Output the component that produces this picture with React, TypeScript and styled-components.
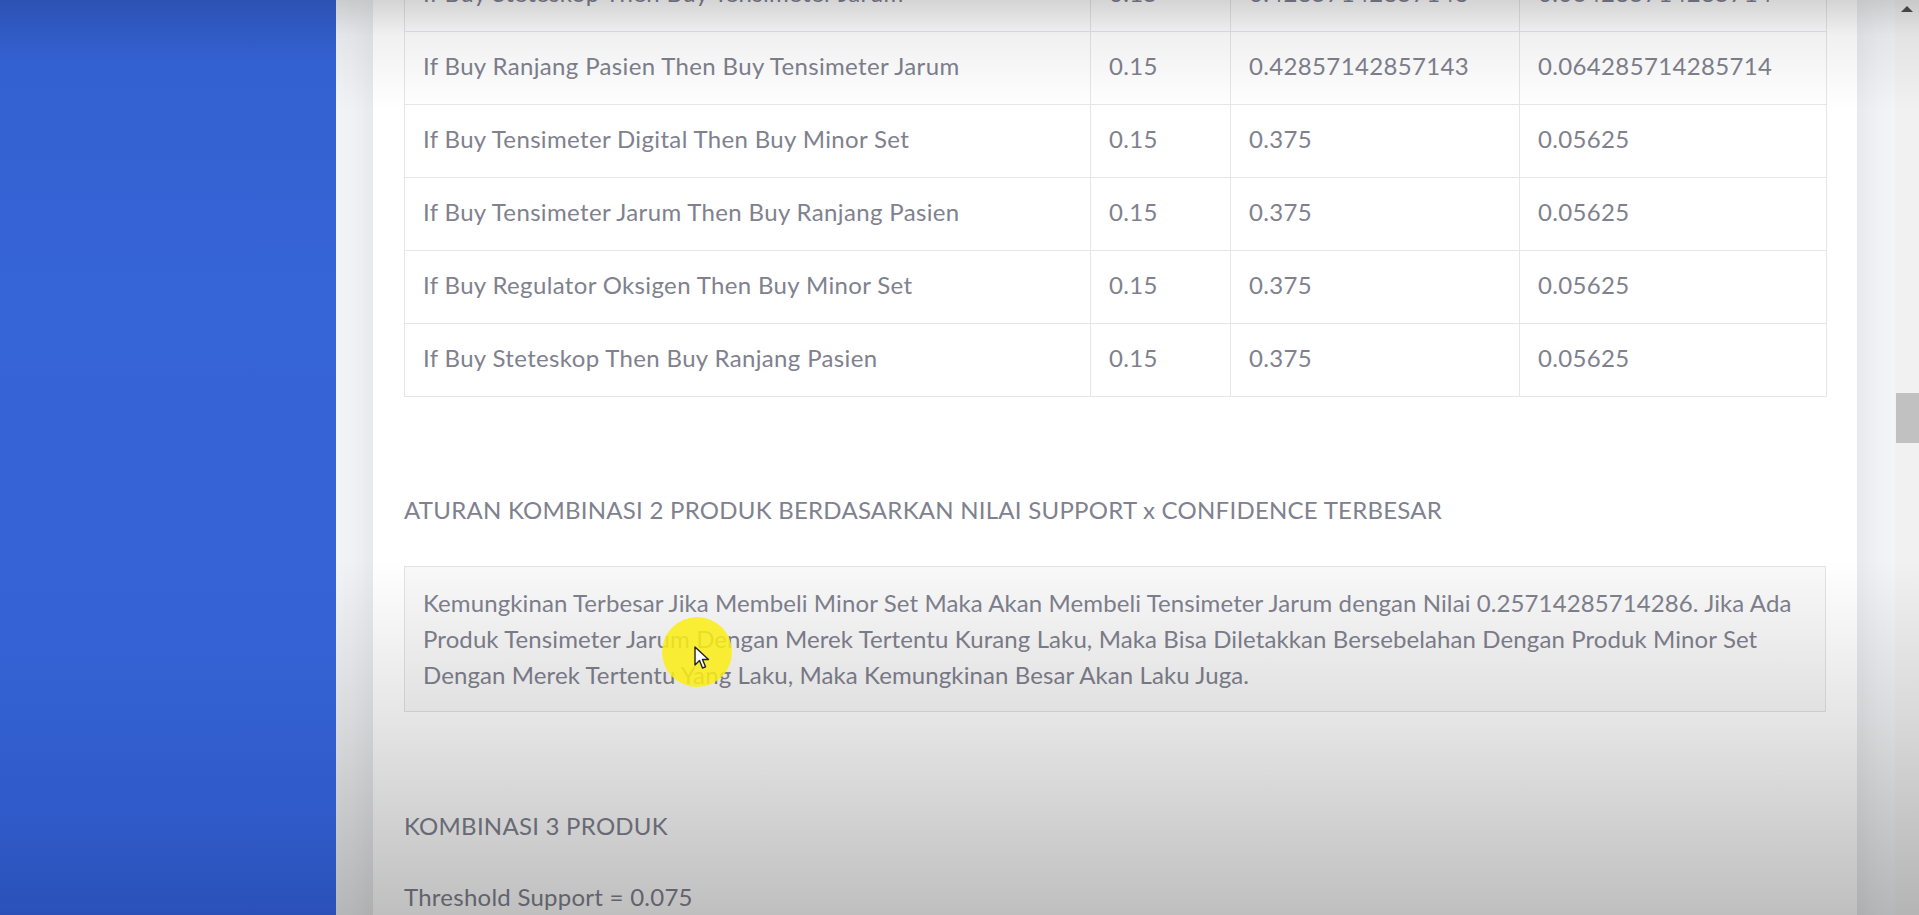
import React from "react";
import styled, { createGlobalStyle } from "styled-components";

const GlobalStyle = createGlobalStyle`
  html, body {
    margin: 0;
    padding: 0;
    overflow: hidden;
    background: #f8f9fc;
  }
  body {
    font-family: "Lato", "Open Sans", "Liberation Sans", sans-serif;
    -webkit-font-smoothing: antialiased;
  }
  * { box-sizing: border-box; }
`;

const Page = styled.div`
  position: relative;
  display: flex;
  width: 1919px;
  height: 915px;
  overflow: hidden;
`;

const Sidebar = styled.nav`
  flex: 0 0 336px;
  background: linear-gradient(
    180deg,
    #2d52b4 0px,
    #3361d1 60px,
    #3665d8 300px,
    #3563d5 650px,
    #2f5ac8 820px,
    #2b51b9 915px
  );
`;

const Main = styled.div`
  position: relative;
  flex: 1;
  display: flex;
  min-width: 0;
`;

const ContentWrapper = styled.div`
  flex: 1;
  min-width: 0;
  overflow: hidden;
  background: #f4f5f8;
  padding: 0 38px 0 37px;
`;

const Card = styled.section`
  display: flow-root;
  background: #ffffff;
  box-shadow: 0 4px 42px 0 rgba(58, 59, 69, 0.12);
  padding: 0 31px 200px;
  color: #80818e;
  font-size: 24px;
  line-height: 36px;
  letter-spacing: 0.25px;
`;

const Table = styled.table`
  width: 100%;
  border-collapse: collapse;
  table-layout: fixed;
  margin-top: -42px;
`;

const Cell = styled.td<{ $w: number }>`
  width: ${(p) => p.$w}px;
  border: 1px solid #e5e6ec;
  padding: 16px 18px 20px;
  height: 73px;
  vertical-align: middle;
  white-space: nowrap;
  letter-spacing: 0.35px;
`;

const SectionTitle = styled.div<{ $top: number }>`
  margin-top: ${(p) => p.$top}px;
`;

const InfoBox = styled.div`
  margin-top: 38px;
  border: 1px solid #e3e3e6;
  background: #f9f9fa;
  padding: 18px 18px;
  letter-spacing: 0.1px;
`;

const Line = styled.div<{ $top: number }>`
  margin-top: ${(p) => p.$top}px;
`;

const Scrollbar = styled.div`
  flex: 0 0 24px;
  background: #f1f1f1;
  display: flex;
  flex-direction: column;
  align-items: center;
`;

const ScrollArrow = styled.div`
  margin-top: 6px;
  width: 0;
  height: 0;
  border-left: 6px solid transparent;
  border-right: 6px solid transparent;
  border-bottom: 6px solid #505050;
`;

const ScrollThumb = styled.div`
  margin-top: 381px;
  align-self: flex-end;
  width: 23px;
  height: 50px;
  background: #c1c1c1;
`;

const Shade = styled.div`
  position: absolute;
  inset: 0;
  pointer-events: none;
  background:
    linear-gradient(
      180deg,
      rgba(0, 0, 0, 0.17) 0px,
      rgba(0, 0, 0, 0.06) 35px,
      rgba(0, 0, 0, 0) 110px
    ),
    linear-gradient(
      180deg,
      rgba(0, 0, 0, 0) 560px,
      rgba(0, 0, 0, 0.1) 720px,
      rgba(0, 0, 0, 0.25) 915px
    );
`;

const Highlight = styled.div`
  position: absolute;
  left: 662px;
  top: 617px;
  width: 70px;
  height: 70px;
  border-radius: 50%;
  background: radial-gradient(
    circle,
    rgba(252, 238, 20, 0.85) 0%,
    rgba(252, 238, 20, 0.85) 85%,
    rgba(252, 238, 20, 0.5) 100%
  );
  pointer-events: none;
`;

const Pointer = styled.svg`
  position: absolute;
  left: 694px;
  top: 646px;
  width: 16px;
  height: 24px;
  pointer-events: none;
`;

const rows: [string, string, string, string][] = [
  ["If Buy Steteskop Then Buy Tensimeter Jarum", "0.15", "0.42857142857143", "0.064285714285714"],
  ["If Buy Ranjang Pasien Then Buy Tensimeter Jarum", "0.15", "0.42857142857143", "0.064285714285714"],
  ["If Buy Tensimeter Digital Then Buy Minor Set", "0.15", "0.375", "0.05625"],
  ["If Buy Tensimeter Jarum Then Buy Ranjang Pasien", "0.15", "0.375", "0.05625"],
  ["If Buy Regulator Oksigen Then Buy Minor Set", "0.15", "0.375", "0.05625"],
  ["If Buy Steteskop Then Buy Ranjang Pasien", "0.15", "0.375", "0.05625"],
];

const widths = [686, 140, 289, 307];

export default function App() {
  return (
    <>
      <GlobalStyle />
      <Page>
        <Sidebar />
        <Main>
          <ContentWrapper>
            <Card>
              <Table>
                <tbody>
                  {rows.map((r, i) => (
                    <tr key={i}>
                      {r.map((c, j) => (
                        <Cell key={j} $w={widths[j]}>
                          {c}
                        </Cell>
                      ))}
                    </tr>
                  ))}
                </tbody>
              </Table>
              <SectionTitle $top={95}>
                ATURAN KOMBINASI 2 PRODUK BERDASARKAN NILAI SUPPORT x CONFIDENCE TERBESAR
              </SectionTitle>
              <InfoBox>
                Kemungkinan Terbesar Jika Membeli Minor Set Maka Akan Membeli Tensimeter Jarum dengan
                Nilai 0.25714285714286. Jika Ada Produk Tensimeter Jarum Dengan Merek Tertentu Kurang
                Laku, Maka Bisa Diletakkan Bersebelahan Dengan Produk Minor Set Dengan Merek Tertentu
                Yang Laku, Maka Kemungkinan Besar Akan Laku Juga.
              </InfoBox>
              <SectionTitle $top={96}>KOMBINASI 3 PRODUK</SectionTitle>
              <Line $top={35}>Threshold Support = 0.075</Line>
            </Card>
          </ContentWrapper>
          <Scrollbar>
            <ScrollArrow />
            <ScrollThumb />
          </Scrollbar>
          <Shade />
        </Main>
        <Highlight />
        <Pointer viewBox="0 0 16 24">
          <path
            d="M1 1 L1 19 L5.5 14.5 L8.5 22 L11.5 20.8 L8.5 13.5 L14.5 13.5 Z"
            fill="#ffffff"
            stroke="#222222"
            strokeWidth="1.4"
            strokeLinejoin="round"
          />
        </Pointer>
      </Page>
    </>
  );
}
